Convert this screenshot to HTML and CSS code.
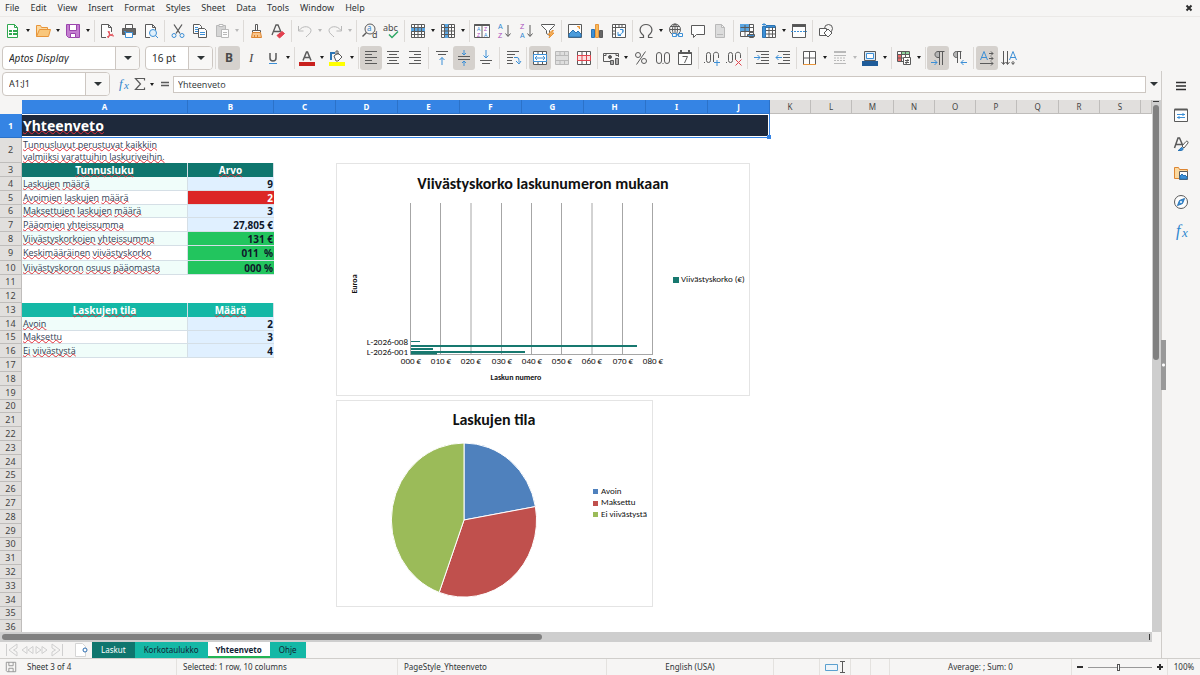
FILE: index.html
```html
<!DOCTYPE html>
<html lang="fi">
<head>
<meta charset="utf-8">
<title>Yhteenveto</title>
<link rel="stylesheet" href="styles.css">
</head>
<body>
<nav class="menubar">
  <button>File</button><button>Edit</button><button>View</button><button>Insert</button><button>Format</button><button>Styles</button><button>Sheet</button><button>Data</button><button>Tools</button><button>Window</button><button>Help</button>
  <button class="close" aria-label="Close"><svg viewBox="0 0 8 8" width="8" height="8"><path class="heavy" d="M1.500 1.500l5 5M6.500 1.500l-5 5"/></svg></button>
</nav>

<div class="toolbar standard">
  <button class="tool" aria-label="New"><svg viewBox="0 0 16 16"><path class="green fw" d="M2.500 1.500h7l3 3v10h-10z"/><path class="green" d="M9.500 1.500v3h3"/><path class="fg" d="M4 7h8v5H4z"/><path stroke="#fff" d="M4 9.500h8M7.500 7v5"/></svg></button><button class="caret" aria-label="New options"></button>
  <button class="tool" aria-label="Open"><svg viewBox="0 0 16 16"><path fill="#fbd9a0" stroke="#e8953a" d="M1.500 13.500v-11h4l1 2h6v2"/><path fill="#f9c77c" stroke="#e8953a" d="M1.500 13.500l3-7h11l-2 7z"/></svg></button><button class="caret" aria-label="Open options"></button>
  <button class="tool" aria-label="Save"><svg viewBox="0 0 16 16"><path fill="#c47fd0" stroke="#9b45ad" d="M1.500 1.500h13v13h-11l-2-2z"/><path fill="#fff" stroke="#9b45ad" d="M4.500 1.500h7v6h-7zM5.500 10.500h5v4h-5z"/></svg></button><button class="caret" aria-label="Save options"></button>
  <span class="sep tight"></span>
  <button class="tool" aria-label="Export as PDF"><svg viewBox="0 0 16 16"><path class="fw" d="M7 14.500H2.500v-13h7l3 3V9M9.500 1.500v3h3"/><path class="red" d="M9 8c1 3 3 5 6 5M9 15c1-1 2-4 1-7M8 14l6-3"/></svg></button>
  <button class="tool" aria-label="Print"><svg viewBox="0 0 16 16"><path class="fw" d="M4.500 5V1.500h7V5"/><path fill="#666" d="M1.500 5.500h13v6h-13z"/><path class="blue fw" d="M4.500 9.500h7v5h-7z"/><path class="blue" d="M3 8.500h2"/></svg></button>
  <button class="tool" aria-label="Print Preview"><svg viewBox="0 0 16 16"><path class="fw" d="M7 14.500H2.500v-13h7l3 3V7M9.500 1.500v3h3"/><circle class="blue" fill="#e1f0fb" cx="10" cy="10" r="3.500"/><path class="blue" d="M12.500 12.500l2.500 2.500"/></svg></button>
  <span class="sep"></span>
  <button class="tool" aria-label="Cut"><svg viewBox="0 0 16 16"><path stroke-width="1.300" d="M4 1.500l6 9M12 1.500l-6 9"/><circle class="blue" cx="4" cy="12.500" r="2"/><circle class="blue" cx="12" cy="12.500" r="2"/></svg></button>
  <button class="tool" aria-label="Copy"><svg viewBox="0 0 16 16"><path class="fw" d="M1.500 1.500h6l2 2v7h-8z"/><path class="fw" d="M6.500 5.500h6l2 2v7h-8z"/><path class="blue" d="M3 4.500h3M3 6.500h3M3 8.500h3M8 9.500h5M8 11.500h5"/></svg></button>
  <button class="tool" aria-label="Paste"><svg viewBox="0 0 16 16"><path class="dim" fill="#d5d5d5" d="M2.500 2.500h9v11h-9z"/><path class="dim fw" d="M5 1.500h4v2H5zM7.500 6.500h7v8h-7zM9 9.500h4M9 11.500h4"/></svg></button><button class="caret off" aria-label="Paste options"></button>
  <span class="sep tight"></span>
  <button class="tool" aria-label="Clone Formatting"><svg viewBox="0 0 16 16"><path class="fw" d="M7.500 1.500h2v6h-2zM4.500 7.500h8v2h-8z"/><path fill="#f8c48a" stroke="#dd8531" d="M4.500 9.500h8l1 5h-10z"/><path stroke="#dd8531" d="M6.500 12v2M9.500 12v2"/></svg></button>
  <button class="tool" aria-label="Clear Formatting"><svg viewBox="0 0 16 16"><path stroke-width="1.300" d="M2 12l4-10h2l3 7M4 8.500h6"/><path fill="#e3404f" stroke="#e3404f" d="M7 12.500l5-4 2.500 2-5 4.500z"/></svg></button>
  <span class="sep"></span>
  <button class="tool" aria-label="Undo"><svg viewBox="0 0 16 16"><path class="dim" d="M1.500 3v5h5M2 7.500c4-6 12-4 12 0 0 3-3 4-5 6.500"/></svg></button><button class="caret off" aria-label="Undo options"></button>
  <button class="tool" aria-label="Redo"><svg viewBox="0 0 16 16"><path class="dim" d="M14.500 3v5h-5M14 7.500c-4-6-12-4-12 0 0 3 3 4 5 6.500"/></svg></button><button class="caret off" aria-label="Redo options"></button>
  <span class="sep tight"></span>
  <button class="tool" aria-label="Find and Replace"><svg viewBox="0 0 16 16"><circle cx="9" cy="6" r="5"/><path stroke-width="1.500" d="M5.500 9.500l-4 4"/><text class="g bl" x="6" y="8" font-size="8">a</text><text class="g" x="11" y="15" font-size="9">d</text></svg></button>
  <button class="tool" aria-label="Spelling"><svg viewBox="0 0 16 16"><text class="g" x="0" y="8" font-size="9">abc</text><path stroke="#2fa866" stroke-width="1.500" d="M6 11.500l3 3 6-6"/></svg></button>
  <span class="sep"></span>
  <button class="tool" aria-label="Row"><svg viewBox="0 0 16 16"><path class="fw" d="M1.500 1.500h13v13h-13z"/><path fill="#5ba6e2" stroke="none" d="M1 4.500h14v4H1z"/><path d="M1.500 11.500h13M4.500 2v12M8 2v12M11.500 2v12M1.500 8.500h13M1.500 4.500h13"/></svg></button><button class="caret" aria-label="Row options"></button>
  <button class="tool" aria-label="Column"><svg viewBox="0 0 16 16"><path class="fw" d="M1.500 1.500h13v13h-13z"/><path fill="#5ba6e2" stroke="none" d="M4.500 1h4v14h-4z"/><path d="M11.500 2v12M4.500 2v12M8.500 2v12M1.500 4.500h13M1.500 8h13M1.500 11.500h13"/></svg></button><button class="caret" aria-label="Column options"></button>
  <span class="sep tight"></span>
  <button class="tool" aria-label="Sort"><svg viewBox="0 0 16 16"><path class="fw" d="M.5 1.500h15v13H.5zM8 2v12"/><path stroke-width="2" d="M.5 2h15"/><text class="g ls bl" x="3" y="8" font-size="5">A</text><text class="g ls pu" x="10" y="8" font-size="5">Z</text><text class="g ls pu" x="3" y="14" font-size="5">Z</text><text class="g ls bl" x="10" y="14" font-size="5">A</text></svg></button>
  <button class="tool" aria-label="Sort Ascending"><svg viewBox="0 0 16 16"><text class="g ls bl" x="2" y="6" font-size="7">A</text><text class="g ls pu" x="2" y="15" font-size="7">Z</text><path d="M12 2v11M9.500 10.500l2.500 3 2.500-3"/></svg></button>
  <button class="tool" aria-label="Sort Descending"><svg viewBox="0 0 16 16"><text class="g ls pu" x="2" y="6" font-size="7">Z</text><text class="g ls bl" x="2" y="15" font-size="7">A</text><path d="M12 2v11M9.500 10.500l2.500 3 2.500-3"/></svg></button>
  <button class="tool" aria-label="AutoFilter"><svg viewBox="0 0 16 16"><path class="fw" d="M1.500 1.500h13v1l-5 5v5l-3-2v-3l-5-5z"/><path fill="#f7b25c" stroke="#e8953a" d="M12 7.500l-4 4h2.500L9 15l5-5h-2.500l2-2.500z"/></svg></button>
  <span class="sep"></span>
  <button class="tool" aria-label="Image"><svg viewBox="0 0 16 16"><path class="fw" d="M1.500 1.500h13v13h-13z"/><path fill="#4a9bdb" stroke="#2b74b4" d="M2 14v-3l4-4 3 3 2-2 3 3v3z"/><path stroke="#e8953a" fill="#f7b25c" d="M10 3.500h2.500V6"/></svg></button>
  <button class="tool" aria-label="Chart"><svg viewBox="0 0 16 16"><path fill="#3c8fd6" stroke="#2b74b4" d="M2.500 6.500h3v8h-3z"/><path fill="#f7b95c" stroke="#e8953a" d="M6.500 1.500h3v13h-3z"/><path fill="#666" d="M10.500 7.500h3v7h-3z"/></svg></button>
  <button class="tool" aria-label="Pivot Table"><svg viewBox="0 0 16 16"><path class="fw" d="M1.500 1.500h13v13h-13zM1.500 4.500h13M4.500 1.500v13M8 2v2M11 2v2M2 8h2M2 11h2"/><path class="blue" d="M7 9v3.500h3M12 9.500V6.500H9M7 12c3 0 5-2 5-5"/></svg></button>
  <span class="sep"></span>
  <button class="tool" aria-label="Special Character"><svg viewBox="0 0 16 16"><path stroke-width="1.200" d="M1.500 14.500h4v-2C-1 7 3 1.500 8 1.500s9 5.500 2.500 11v2h4"/></svg></button><button class="caret" aria-label="Symbols"></button>
  <button class="tool" aria-label="Hyperlink"><svg viewBox="0 0 16 16"><circle cx="7" cy="6.500" r="5.500"/><path d="M1.500 6.500h11M2.500 3.500h9M7 1v9"/><ellipse cx="7" cy="6.500" rx="2.500" ry="5.500"/><path class="blue fw" d="M4.500 10.500h4v3h-4zM10.500 10.500h4v3h-4zM7.500 12h4"/></svg></button>
  <button class="tool" aria-label="Comment"><svg viewBox="0 0 16 16"><path class="fw" d="M1.500 2.500h13v9h-8l-3 3v-3h-2z"/></svg></button>
  <button class="tool" aria-label="Headers and Footers"><svg viewBox="0 0 16 16"><path class="dim" fill="#dcdcdc" d="M3.500 1.500h6l3 3v10h-9zM9.500 1.500v3h3M5 11.500h6"/></svg></button>
  <span class="sep"></span>
  <button class="tool" aria-label="Define Print Area"><svg viewBox="0 0 16 16"><path class="fw" d="M1.500 1.500h13v12h-13z"/><path fill="#5ba6e2" stroke="none" d="M1 1h9v8H1z"/><path d="M1.500 4.500h13M1.500 8.500h13M6 2v11M10.500 2v11"/><path class="fw" d="M10.500 9.500h4v5h-4z"/><path fill="#3c8fd6" d="M8.500 11.500h7v2h-7z"/></svg></button>
  <button class="tool" aria-label="Freeze Rows and Columns"><svg viewBox="0 0 16 16"><path class="fw" d="M4.500 3.500h10v11h-10z"/><path fill="#3c8fd6" stroke="#2b74b4" d="M1.500 3.500h3v11h-3zM5 2.500h9v2H5z"/><path d="M5 7.500h9M5 11h9M8 4v10M11.500 4v10"/><path class="blue" d="M3 0v3M1 1.500h4"/></svg></button><button class="caret" aria-label="Freeze options"></button>
  <button class="tool" aria-label="Split Window"><svg viewBox="0 0 16 16"><path class="fw" d="M1.500 1.500h13v13h-13z"/><path fill="#555" d="M1.500 1.500h13v2h-13z"/><path class="blue" stroke-dasharray="2 1" d="M0 8.500h16"/></svg></button>
  <span class="sep"></span>
  <button class="tool" aria-label="Show Draw Functions"><svg viewBox="0 0 16 16"><circle cx="10.500" cy="5.500" r="4"/><path class="fw" d="M1.500 5.500h7v7h-7z"/><path class="fw" d="M10 6l4 4-4 4-4-4z"/></svg></button>
</div>

<div class="toolbar formatting">
  <div class="combo font"><input type="text" aria-label="Font Name" value="Aptos Display"><button aria-label="Show fonts"></button></div>
  <div class="combo size"><input type="text" aria-label="Font Size" value="16 pt"><button aria-label="Show sizes"></button></div>
  <span class="sep"></span>
  <button class="tool on" aria-label="Bold"><svg viewBox="0 0 16 16"><text class="g" x="4" y="12" font-size="12" font-weight="700">B</text></svg></button>
  <button class="tool" aria-label="Italic"><svg viewBox="0 0 16 16"><text class="g it" x="6" y="12" font-size="13">I</text></svg></button>
  <button class="tool" aria-label="Underline"><svg viewBox="0 0 16 16"><path stroke-width="1.500" d="M5 3v5c0 4 6 4 6 0V3"/><path class="blue" d="M4 13.500h8"/></svg></button><button class="caret" aria-label="Underline options"></button>
  <span class="sep tight"></span>
  <button class="tool" aria-label="Font Color"><svg viewBox="0 0 16 16"><path stroke-width="1.500" d="M4 10.500L7.500 2h1L12 10.500M5 7.500h6"/><path fill="#c9211e" stroke="none" d="M0 12h16v4H0z"/></svg></button><button class="caret" aria-label="Font Color options"></button>
  <button class="tool" aria-label="Background Color"><svg viewBox="0 0 16 16"><path class="fw" d="M5 6l4-3 4 4-4 4H7zM7 5V1h2v4"/><path stroke="#2b74b4" stroke-width="2" d="M6 3H2v7"/><path fill="#ff0" stroke="none" d="M0 12h16v4H0z"/></svg></button><button class="caret" aria-label="Background Color options"></button>
  <span class="sep tight"></span>
  <button class="tool on" aria-label="Align Left"><svg viewBox="0 0 16 16"><path d="M2 1.500h12M2 4.500h7M2 7.500h12M2 10.500h7M2 13.500h12"/></svg></button>
  <button class="tool" aria-label="Center Horizontally"><svg viewBox="0 0 16 16"><path d="M2 1.500h12M4 4.500h8M2 7.500h12M4 10.500h8M2 13.500h12"/></svg></button>
  <button class="tool" aria-label="Align Right"><svg viewBox="0 0 16 16"><path d="M2 1.500h12M7 4.500h7M2 7.500h12M7 10.500h7M2 13.500h12"/></svg></button>
  <span class="sep"></span>
  <button class="tool" aria-label="Align Top"><svg viewBox="0 0 16 16"><path d="M2 1.500h12M4 4.500h8"/><path class="blue" d="M8 15V7.500M5.500 10L8 7.500l2.500 2.500"/></svg></button>
  <button class="tool on" aria-label="Center Vertically"><svg viewBox="0 0 16 16"><path d="M2 6.500h12M2 9.500h12"/><path class="blue" d="M8 0v5M6 3l2 2 2-2M8 16v-5M6 13l2-2 2 2"/></svg></button>
  <button class="tool" aria-label="Align Bottom"><svg viewBox="0 0 16 16"><path d="M2 10.500h12M4 13.500h8"/><path class="blue" d="M8 0v8M5.500 5.500L8 8l2.500-2.500"/></svg></button>
  <span class="sep"></span>
  <button class="tool" aria-label="Wrap Text"><svg viewBox="0 0 16 16"><path d="M2 1.500h12M2 4.500h8M2 7.500h6M2 10.500h5M2 13.500h6"/><path class="blue" d="M9 7.500h3c2 0 2 2 2 5M11 11l3 3 2-3"/></svg></button>
  <span class="sep"></span>
  <button class="tool on" aria-label="Merge and Center Cells"><svg viewBox="0 0 16 16"><path class="fw" d="M1.500 1.500h13v13h-13zM6 2v12M10.500 2v12"/><path class="blue fw" d="M1.500 4.500h13v7h-13z"/><path class="blue" d="M3 8h10M5 6L3 8l2 2M11 6l2 2-2 2"/></svg></button>
  <button class="tool" aria-label="Merge Cells"><svg viewBox="0 0 16 16"><path class="dim" fill="#dedede" d="M1.500 1.500h13v13h-13zM1.500 5.500h13M1.500 10.500h13M6 2v3M10.500 2v3M6 11v3M10.500 11v3"/></svg></button>
  <button class="tool" aria-label="Unmerge Cells"><svg viewBox="0 0 16 16"><path class="fw" d="M1.500 1.500h13v13h-13zM6 2v12M10.500 2v12"/><path class="red" fill="#fbe0e0" d="M1.500 5.500h13v5h-13zM6 5v6M10.500 5v6"/></svg></button>
  <span class="sep"></span>
  <button class="tool" aria-label="Format as Currency"><svg viewBox="0 0 16 16"><path d="M8 11.500H.5v-8h15V7M3 3.500v2H.5M13 3.500v2h2"/><circle fill="#555" cx="7" cy="7" r="1.500"/><path fill="#aaa" d="M7.500 10.500h3v4h-3zM12.500 8.500h3v6h-3z"/></svg></button><button class="caret" aria-label="Currency options"></button>
  <button class="tool" aria-label="Format as Percent"><svg viewBox="0 0 16 16"><circle cx="5" cy="5" r="2.500"/><circle cx="11" cy="11" r="2.500"/><path d="M12.500 1.500l-9 13"/></svg></button>
  <button class="tool" aria-label="Format as Number"><svg viewBox="0 0 16 16"><rect x="1.500" y="2.500" width="5" height="11" rx="2.500"/><rect x="9.500" y="2.500" width="5" height="11" rx="2.500"/><path d="M7.500 13.500h1"/></svg></button>
  <button class="tool" aria-label="Format as Date"><svg viewBox="0 0 16 16"><path class="fw" d="M1.500 2.500h13v12h-13z"/><path stroke-width="2" d="M1.500 3h13M4 0v3M12 0v3"/><path d="M5.500 6.500h5l-3 6.500"/></svg></button>
  <span class="sep"></span>
  <button class="tool" aria-label="Add Decimal Place"><svg viewBox="0 0 16 16"><rect x="2.500" y="2.500" width="4" height="10" rx="2"/><path d="M9.500 12V4.500c0-3 5-3 5 0V8M0 12.500h1"/><path class="blue" d="M10 12.500h6M13 10v6"/></svg></button>
  <button class="tool" aria-label="Delete Decimal Place"><svg viewBox="0 0 16 16"><rect x="2.500" y="2.500" width="4" height="10" rx="2"/><path d="M9.500 10V4.500c0-3 5-3 5 0V8M0 12.500h1"/><path class="red" d="M9.500 9.500l6 6M15.500 9.500l-6 6"/></svg></button>
  <span class="sep"></span>
  <button class="tool" aria-label="Increase Indent"><svg viewBox="0 0 16 16"><path d="M3 1.500h13M8 4.500h8M8 7.500h8M8 10.500h8M3 13.500h13"/><path class="blue" d="M1 7.500h6M4.500 5L7 7.500 4.500 10"/></svg></button>
  <button class="tool" aria-label="Decrease Indent"><svg viewBox="0 0 16 16"><path d="M3 1.500h12M8 4.500h7M8 7.500h7M8 10.500h7M3 13.500h12"/><path class="blue" d="M7 7.500H1M3.500 5L1 7.500 3.500 10"/></svg></button>
  <span class="sep"></span>
  <button class="tool" aria-label="Borders"><svg viewBox="0 0 16 16"><path class="fw" d="M1.500 14V1.500h12V14M1.500 8h12M7.500 2v12"/><path stroke="#e8953a" d="M1 14.500h13"/></svg></button><button class="caret" aria-label="Borders options"></button>
  <button class="tool" aria-label="Border Style"><svg viewBox="0 0 16 16"><path class="dim" stroke-width="2" d="M2 2h12"/><path class="dim" d="M2 5.500h12M2 13.500h12"/><path class="dim" stroke-dasharray="2 1" d="M2 8h12M2 10.500h12"/></svg></button><button class="caret off" aria-label="Border Style options"></button>
  <button class="tool" aria-label="Border Color"><svg viewBox="0 0 16 16"><path fill="#dcecf8" d="M2.500 1.500h11v9h-11z"/><path class="blue fw" d="M4.500 3.500h7v5h-7z"/><path fill="#1f5c99" stroke="none" d="M0 11h16v5H0z"/></svg></button><button class="caret" aria-label="Border Color options"></button>
  <span class="sep tight"></span>
  <button class="tool" aria-label="Conditional"><svg viewBox="0 0 16 16"><path class="fw" d="M1.500 1.500h12v10h-12z"/><path fill="#8fd19e" stroke="none" d="M5 2h8v3H5z"/><path fill="#ec6b6b" stroke="none" d="M2 5h4v6H2z"/><path d="M1.500 4.500h12M1.500 8h12M5.500 2v10M9.500 2v10"/><path class="fw" d="M7.500 7.500h7v7h-7zM9 10.500h4M9 12.500h4M12 9l-2 5"/></svg></button><button class="caret" aria-label="Conditional options"></button>
  <span class="sep tight"></span>
  <button class="tool on" aria-label="Left-To-Right"><svg viewBox="0 0 16 16"><path fill="#b5b5b5" d="M9.500 1.500H8c-4 0-4 6 0 6h1.500z"/><path d="M9.500 15V1.500h5M12.500 1.500V15"/><path class="blue" d="M1 12.500h6M4.500 10L7 12.500 4.500 15"/></svg></button>
  <button class="tool" aria-label="Right-To-Left"><svg viewBox="0 0 16 16"><path fill="#b5b5b5" d="M5.500 1.500H4.500c-4 0-4 6 0 6h1z"/><path d="M5.500 13V1.500h4M8.500 1.500V9"/><path class="blue" d="M15 12.500H9M11.500 10L9 12.500l2.500 2.500"/></svg></button>
  <span class="sep"></span>
  <button class="tool on" aria-label="Text direction from left to right"><svg viewBox="0 0 16 16"><path class="blue" d="M1.500 10L5 1.500 8.500 10M3 7.500h4"/><path d="M10 3.500h4M10 8.500h4M1 13.500h13M12 1.500l2 2-2 2M12 6.500l2 2-2 2M12 11.500l2 2-2 2"/></svg></button>
  <button class="tool" aria-label="Text direction from top to bottom"><svg viewBox="0 0 16 16"><path class="blue" d="M8.500 10L12 1.500 15.500 10M10 7.500h4"/><path d="M2.500 1v13M6.500 1v13M12 11v3M.5 12l2 2.500 2-2.500M5 12l1.500 2.500L8.500 12M10.500 12.500l1.500 2 1.500-2"/></svg></button>
</div>

<div class="workspace">
  <main class="document">
    <div class="formulabar">
      <div class="combo name"><input type="text" aria-label="Name Box" value="A1:J1"><button aria-label="Show names"></button></div>
      <div class="functions">
        <button class="fx" aria-label="Function Wizard"><svg viewBox="0 0 16 16"><text class="g bl it" x="3" y="12" font-size="13">f</text><text class="g bl it" x="8" y="13" font-size="11">x</text></svg></button>
        <button class="fx" aria-label="Select Function"><svg viewBox="0 0 16 16"><path stroke-width="1.200" d="M12.500 4.500v-2h-9l5 5.500-5 5.500h9v-2"/></svg></button><button class="caret" aria-label="Functions"></button>
        <button class="fx" aria-label="Formula"><svg viewBox="0 0 16 16"><path stroke-width="1.500" d="M4 6.500h8M4 9.500h8"/></svg></button>
      </div>
      <input class="formula" type="text" aria-label="Input line" value="Yhteenveto">
      <button class="expand" aria-label="Expand Formula Bar"></button>
    </div>

    <div class="viewport">
      <div class="sheet">
        <table>
          <colgroup><col class="c-head"><col class="c-a"><col class="c-b"><col class="c-mid"><col class="c-mid"><col class="c-mid"><col class="c-mid"><col class="c-mid"><col class="c-mid"><col class="c-mid"><col class="c-mid"><col class="c-std"><col class="c-std"><col class="c-wide"><col class="c-std"><col class="c-std"><col class="c-std"><col class="c-wide"><col class="c-std"><col class="c-std"><col></colgroup>
          <thead><tr><td></td><th class="sel">A</th><th class="sel">B</th><th class="sel">C</th><th class="sel">D</th><th class="sel">E</th><th class="sel">F</th><th class="sel">G</th><th class="sel">H</th><th class="sel">I</th><th class="sel">J</th><th>K</th><th>L</th><th>M</th><th>N</th><th>O</th><th>P</th><th>Q</th><th>R</th><th>S</th><th></th></tr></thead>
          <tbody>
            <tr class="r-title"><th class="sel">1</th><td class="title" colspan="10"><span class="sp">Yhteenveto</span><i class="handle"></i></td></tr>
            <tr class="r-note"><th>2</th><td class="note"><span class="sp">Tunnusluvut perustuvat kaikkiin valmiiksi varattuihin laskuriveihin.</span></td></tr>
            <tr><th>3</th><td class="head"><span class="sp">Tunnusluku</span></td><td class="head"><span class="sp">Arvo</span></td></tr>
            <tr><th>4</th><td class="label mint"><span class="sp">Laskujen</span> <span class="sp">määrä</span></td><td class="num">9</td></tr>
            <tr><th>5</th><td class="label"><span class="sp">Avoimien</span> <span class="sp">laskujen</span> <span class="sp">määrä</span></td><td class="num bad">2</td></tr>
            <tr class="s"><th>6</th><td class="label mint"><span class="sp">Maksettujen</span> <span class="sp">laskujen</span> <span class="sp">määrä</span></td><td class="num">3</td></tr>
            <tr><th>7</th><td class="label"><span class="sp">Pääomien</span> <span class="sp">yhteissumma</span></td><td class="num">27,805 €</td></tr>
            <tr><th>8</th><td class="label mint"><span class="sp">Viivästyskorkojen</span> <span class="sp">yhteissumma</span></td><td class="num good">131 €</td></tr>
            <tr class="l"><th>9</th><td class="label"><span class="sp">Keskimääräinen</span> <span class="sp">viivästyskorko</span></td><td class="num good">011 &nbsp;%</td></tr>
            <tr><th>10</th><td class="label mint"><span class="sp">Viivästyskoron</span> <span class="sp">osuus</span> <span class="sp">pääomasta</span></td><td class="num good">000 %</td></tr>
            <tr><th>11</th></tr>
            <tr><th>12</th></tr>
            <tr><th>13</th><td class="head teal"><span class="sp">Laskujen tila</span></td><td class="head teal"><span class="sp">Määrä</span></td></tr>
            <tr><th>14</th><td class="label mint"><span class="sp">Avoin</span></td><td class="num">2</td></tr>
            <tr class="s"><th>15</th><td class="label"><span class="sp">Maksettu</span></td><td class="num">3</td></tr>
            <tr><th>16</th><td class="label mint"><span class="sp">Ei</span> <span class="sp">viivästystä</span></td><td class="num">4</td></tr>
            <tr><th>17</th></tr>
            <tr><th>18</th></tr>
            <tr><th>19</th></tr>
            <tr class="s"><th>20</th></tr>
            <tr><th>21</th></tr>
            <tr><th>22</th></tr>
            <tr><th>23</th></tr>
            <tr><th>24</th></tr>
            <tr class="s"><th>25</th></tr>
            <tr><th>26</th></tr>
            <tr><th>27</th></tr>
            <tr><th>28</th></tr>
            <tr><th>29</th></tr>
            <tr class="s"><th>30</th></tr>
            <tr><th>31</th></tr>
            <tr><th>32</th></tr>
            <tr><th>33</th></tr>
            <tr><th>34</th></tr>
            <tr class="s"><th>35</th></tr>
            <tr><th>36</th></tr>
          </tbody>
        </table>

        <svg class="chart bars" viewBox="-1 -1 414 233" role="img" aria-label="Viivästyskorko laskunumeron mukaan">
          <text class="ctitle" x="206" y="25">Viivästyskorko laskunumeron mukaan</text>
          <path class="grid" d="M73.500 39v152M103.500 39v152M134 39v152M164.500 39v152M194.500 39v152M224.500 39v152M255 39v152M285.500 39v152M315.500 39v152M73 190.500h243"/>
          <path class="bar" d="M74 177h9v1h-9zM74 181h226v2H74zM74 184h22v2H74zM74 187h114v2H74zM74 189h26v1.500H74z"/>
          <text class="lbl end" x="71" y="181">L-2026-008</text>
          <text class="lbl end" x="71" y="191">L-2026-001</text>
          <g class="lbl mid"><text x="74" y="200">000 €</text><text x="104" y="200">010 €</text><text x="134" y="200">020 €</text><text x="165" y="200">030 €</text><text x="195" y="200">040 €</text><text x="225" y="200">050 €</text><text x="255" y="200">060 €</text><text x="286" y="200">070 €</text><text x="316" y="200">080 €</text></g>
          <text class="lbl mid strong" x="179" y="216">Laskun numero</text>
          <text class="lbl mid strong" x="0" y="0" transform="translate(20 120) rotate(-90)">Euroa</text>
          <path class="bar" d="M336 113h6v6h-6z"/>
          <text class="lbl" x="344" y="118">Viivästyskorko (€)</text>
        </svg>

        <svg class="chart pie" viewBox="-1 -1 317 207" role="img" aria-label="Laskujen tila">
          <text class="ctitle" x="157" y="24">Laskujen tila</text>
          <g stroke="#fff"><path fill="#4f81bd" d="M127 119V42A72.500 77 0 0 1 198.400 105.600z"/><path fill="#c0504d" d="M127 119L198.400 105.600A72.500 77 0 0 1 102.200 191.400z"/><path fill="#9bbb59" d="M127 119L102.200 191.400A72.500 77 0 0 1 127 42z"/></g>
          <g stroke="none"><path fill="#4f81bd" d="M256 88h5v5h-5z"/><path fill="#c0504d" d="M256 100h5v5h-5z"/><path fill="#9bbb59" d="M256 111h5v5h-5z"/></g>
          <text class="lbl" x="264" y="93">Avoin</text>
          <text class="lbl" x="264" y="104">Maksettu</text>
          <text class="lbl" x="264" y="116">Ei viivästystä</text>
        </svg>
      </div>
      <div class="vscroll"><i class="mark"></i><i class="thumb"></i></div>
    </div>
    <div class="hscroll"><i class="thumb"></i><i class="mark"></i></div>

    <div class="tabs">
      <button class="nav" aria-label="First sheet"><svg viewBox="0 0 14 14"><path d="M1.500 1v12M12 1L4 7l8 6V9L8.500 7 12 5z"/></svg></button>
      <button class="nav" aria-label="Previous sheet"><svg viewBox="0 0 14 14"><path d="M7 3.500L2 7l5 3.500zM13 3.500L8 7l5 3.500z"/></svg></button>
      <button class="nav" aria-label="Next sheet"><svg viewBox="0 0 14 14"><path d="M1 3.500L6 7l-5 3.500zM7 3.500L12 7l-5 3.500z"/></svg></button>
      <button class="nav" aria-label="Last sheet"><svg viewBox="0 0 14 14"><path d="M12.500 1v12M2 1l8 6-8 6V9l3.500-2L2 5z"/></svg></button>
      <button class="add" aria-label="Add Sheet"><svg viewBox="0 0 14 14"><path fill="#fff" stroke="#d5d5d5" d="M.5.500h7l3 3v10h-10z"/><circle cx="10" cy="7" r="2" fill="#fff" stroke="#2b6cb0"/></svg></button>
      <button class="tab dark">Laskut</button><button class="tab">Korkotaulukko</button><button class="tab active">Yhteenveto</button><button class="tab">Ohje</button>
    </div>
  </main>

  <aside class="sidebar">
    <i class="grip"></i>
    <button aria-label="Sidebar Settings"><svg viewBox="0 0 16 16"><path stroke="#2e2e2e" stroke-width="1.500" d="M3 4.500h10M3 8h10M3 11.500h10"/></svg></button>
    <button aria-label="Properties"><svg viewBox="0 0 16 16"><path class="fw" d="M1.500 2.500h13v12h-13z"/><path stroke-width="2" d="M1.500 2.500h13"/><path class="blue" d="M4 7.500h8M4 10.500h8M10 6v3M6 9v3"/></svg></button>
    <button aria-label="Styles"><svg viewBox="0 0 16 16"><path stroke-width="1.500" d="M1.500 12L5 2h1.500L10 10M3 8.500h6"/><path class="fw" d="M9 10l4-4.500c1-1 2.500 0 2 1.500l-4 5z"/><path fill="#3c8fd6" stroke="#2b74b4" d="M5 14.500c2 0 2-3 4-3 2 1 1 3-1 3z"/></svg></button>
    <button aria-label="Gallery"><svg viewBox="0 0 16 16"><path fill="#fbd9a0" stroke="#dd8531" d="M1.500 13.500v-11h4l1 2h8v9z"/><path class="fw" d="M6.500 6.500h8v8h-8z"/><path fill="#3c8fd6" stroke="#2b74b4" d="M7 14v-3l2-2 2 2 1-1 2 2v2z"/></svg></button>
    <button aria-label="Navigator"><svg viewBox="0 0 16 16"><circle class="fw" cx="8" cy="8" r="6.500"/><path fill="#3c8fd6" stroke="#2b74b4" d="M11.500 4.500l-2 5-5 2 2-5z"/><circle cx="8" cy="8" r="1" fill="#fff" stroke="none"/></svg></button>
    <button aria-label="Functions"><svg viewBox="0 0 16 16"><text class="g bl it" x="3" y="13" font-size="16">f</text><text class="g bl it" x="9" y="14" font-size="13">x</text></svg></button>
  </aside>
</div>

<footer class="status">
  <span class="cell"><svg viewBox="0 0 14 14" width="12" height="12"><path stroke="#8c8c8c" d="M1.500 1.500h11v11h-10l-1-1zM4.500 1.500v4h5v-4M4.500 12.500v-4h5v4"/></svg></span>
  <span class="cell left">Sheet 3 of 4</span>
  <span class="cell left">Selected: 1 row, 10 columns</span>
  <span class="cell left">PageStyle_Yhteenveto</span>
  <span class="cell">English (USA)</span>
  <span class="cell"></span>
  <span class="cell"><svg viewBox="0 0 22 12" width="22" height="12"><path stroke="#5ba0cf" fill="#eef5fa" d="M1.500 3.500h12v6h-12z"/><path d="M16 .5h5M18.500.5v11M16 11.500h5"/></svg></span>
  <span class="cell"></span>
  <span class="cell"></span>
  <span class="cell">Average: ; Sum: 0</span>
  <span class="cell zoom"><button aria-label="Zoom Out"><svg viewBox="0 0 8 8" width="8" height="8"><path class="heavy" d="M1 4h6"/></svg></button><input type="range" aria-label="Zoom" min="0" max="100" value="49"><button aria-label="Zoom In"><svg viewBox="0 0 8 8" width="8" height="8"><path class="heavy" d="M1 4h6M4 1v6"/></svg></button></span>
  <span class="cell">100%</span>
</footer>
</body>
</html>
```
FILE: styles.css
```css
* { box-sizing: border-box; }
html, body { height: 100%; }
body {
  margin: 0;
  display: flex;
  flex-direction: column;
  overflow: hidden;
  background: #f6f5f4;
  color: #2e3436;
  font: 9px/12px "Noto Sans", "Open Sans", sans-serif;
}
button, input { font: inherit; color: inherit; }
button { padding: 0; border: 0; background: none; }
input { min-width: 0; }

/* Icon strokes */
svg { fill: none; stroke: #5a5a5a; display: block; flex: none; overflow: visible; }
svg .fw { fill: #fdfdfd; }
svg .blue { stroke: #3c8fd6; }
svg .red { stroke: #e0454f; }
svg .green { stroke: #2fa84f; }
svg .fg { fill: #2fa84f; stroke: none; }
svg .dim { stroke: #b9b9b9; }
svg .heavy { stroke: #2e2e2e; stroke-width: 2; }
svg .g { fill: #4a4a4a; stroke: none; font-family: "Noto Sans", sans-serif; }
svg .ls { font-family: "Liberation Sans", sans-serif; }
svg .bl { fill: #2f86cf; }
svg .pu { fill: #a84bbb; }
svg .it { font-family: "Liberation Serif", serif; font-style: italic; }

.menubar { display: flex; height: 17px; padding: 0 6px 0 0; border-bottom: 1px solid #ebe9e7; }
.menubar button { padding: 0 5px; margin-right: 1px; }
.menubar .close { margin: 0 1px 0 auto; padding: 0; }

.toolbar { display: flex; align-items: center; height: 27px; padding-left: 2px; }
.tool { width: 22px; height: 24px; display: flex; align-items: center; justify-content: center; border-radius: 3px; flex: none; }
.tool svg { width: 16px; height: 16px; }
.tool.on { background: #d5d1cd; }
.caret { width: 8px; height: 24px; display: flex; align-items: center; justify-content: center; flex: none; }
.caret::before { content: ""; border: 2px solid transparent; border-top: 3px solid #1c1c1c; border-bottom: 0; }
.caret.off::before { border-top-color: #b9b9b9; }
.sep { width: 5px; height: 22px; flex: none; background: linear-gradient(#dddad7, #dddad7) center / 1px 100% no-repeat; }
.sep.tight { width: 4px; }

.combo { display: flex; height: 24px; border: 1px solid #cdc7c2; border-radius: 4px; background: #fff; overflow: hidden; flex: none; font-size: 10px; }
.combo input { flex: 1; padding: 0 6px; border: 0; background: none; color: #2a2a2a; }
.combo button { width: 24px; border-left: 1px solid #cdc7c2; background: #f8f7f6; display: grid; place-items: center; }
.combo button::before, .expand::before { content: ""; border: 4px solid transparent; border-top-color: #2e3436; border-bottom: 0; }
.combo.font { width: 138px; margin-right: 5px; }
.combo.font input { font-style: italic; }
.combo.size { width: 68px; }
.combo.name { width: 108px; font-size: 9px; }

.workspace { flex: 1; min-height: 0; display: flex; }
.document { flex: 1; min-width: 0; display: flex; flex-direction: column; }
.formulabar { display: flex; align-items: center; height: 29px; padding: 0 0 3px 2px; }
.functions { display: flex; align-items: center; padding-left: 6px; }
.fx { width: 16px; height: 20px; }
.fx svg { width: 16px; height: 16px; }
.functions .caret { margin-right: 1px; }
.formula { flex: 1; height: 17px; padding: 0 4px; border: 1px solid #cdc7c2; background: #fff; font-family: "Open Sans", sans-serif; }
.expand { width: 15px; height: 17px; display: grid; place-items: center; }

.viewport { flex: 1; min-height: 0; display: flex; }
.sheet { flex: 1; min-width: 0; position: relative; overflow: hidden; background: #fff; }
.sheet table { width: 100%; table-layout: fixed; border-collapse: separate; border-spacing: 0; }
.c-head { width: 22px; }
.c-a { width: 166px; }
.c-b { width: 86px; }
.c-mid { width: 62px; }
.c-std { width: 41px; }
.c-wide { width: 42px; }
.sheet tr { height: 14px; }
.sheet tr.s { height: 13px; }
.sheet tr.l { height: 15px; }
.sheet tr.r-title { height: 24px; }
.sheet tr.r-note { height: 25px; }
.sheet th, .sheet td { padding: 0 1px; height: inherit; line-height: 12px; }
.sheet thead td { background: #f6f5f4; }
.sheet th { padding: 0; font-size: 9px; font-weight: 400; color: #444; background: #e1dfdd; border-right: 1px solid #bfbdbb; border-bottom: 1px solid #bfbdbb; }
.sheet thead th { font-size: 8px; }
.sheet th.sel { background: #3584e4; color: #fff; font-weight: 700; border-color: #2b72c9; }
.sheet .title { position: relative; background: #1e293b; color: #fff; font-size: 14px; font-weight: 700; line-height: 20px; border: solid #3584e4; border-width: 0 1px 1px 0; box-shadow: inset 0 1px #fff, inset 0 -1px #fff, inset -1px 0 #fff; }
.handle { position: absolute; right: -2px; bottom: -2px; width: 4px; height: 4px; background: #3584e4; }
.sp { text-decoration: underline wavy #e0303a 1px; text-decoration-skip-ink: none; text-underline-offset: -1px; }
.sheet .note { padding: 1px 1px 0; vertical-align: top; font-family: "Open Sans", sans-serif; color: #334155; }
.head { background: #0f766e; color: #fff; font-weight: 700; text-align: center; border: solid #d5dfe6; border-width: 0 1px 0 0; font-size: 10px; }
.head.teal { background: #14b8a6; }
.label { font-family: "Open Sans", sans-serif; color: #334155; border: solid #d5dfe6; border-width: 0 1px 1px 0; }
.mint { background: #f0fdfa; }
.num { background: #e0f0ff; color: #0f172a; text-align: right; font-weight: 700; border: solid #d5dfe6; border-width: 0 0 1px; font-size: 10px; }
.num.bad { background: #dc2626; color: #fff; }
.num.good { background: #22c55e; }

.chart { position: absolute; left: 336px; background: #fff; box-shadow: inset 0 0 0 1px #e4e4e4; }
.bars { top: 63px; width: 414px; height: 233px; }
.pie { top: 300px; width: 317px; height: 207px; }
.chart text { stroke: none; fill: #111; font-family: Carlito, Lato, sans-serif; }
.ctitle { font-size: 16px; font-weight: 700; text-anchor: middle; }
.lbl { font-size: 9px; }
.mid { text-anchor: middle; }
.end { text-anchor: end; }
.strong { font-size: 8px; font-weight: 700; }
.grid { stroke: #a6a6a6; }
.bar { fill: #17786f; stroke: none; }

.mark { display: block; background: #3a3a3a; }
.vscroll { width: 9px; padding: 1px 2px 0 1px; background: #cecece; }
.vscroll .mark { height: 1px; margin-bottom: 3px; }
.vscroll .thumb { display: block; height: 48%; border-radius: 3px; background: #808080; }
.hscroll { display: flex; justify-content: space-between; height: 10px; margin-right: 9px; padding: 2px; background: #cecece; }
.hscroll .mark { width: 1px; }
.hscroll .thumb { width: 47%; border-radius: 3px; background: #808080; }

.tabs { display: flex; height: 16px; padding-left: 5px; }
.nav svg { width: 14px; height: 14px; stroke: #cfcfcf; }
.nav { width: 15px; }
.add { width: 14px; margin: 0 3px 0 10px; }
.add svg { width: 14px; height: 14px; }
.tab { padding: 0 9px; background: #14b8a6; color: #123; font-size: 8px; }
.tab.dark { background: #0f766e; color: #fff; }
.tab.active { padding: 2px 8px 0; background: #fff; font-weight: 700; border-bottom: 2px solid #22b455; }

.sidebar { position: relative; width: 39px; border-left: 1px solid #cfccc9; display: flex; flex-direction: column; align-items: center; }
.sidebar button { height: 29px; }
.sidebar svg { width: 16px; height: 16px; }
.grip { position: absolute; left: -1px; top: calc(50% - 25px); width: 5px; height: 50px; background: radial-gradient(circle at 50% 50%, #fff 1px, #999 2px); }

.status { display: grid; grid-template-columns: 21px 156fr 221fr 209fr 167fr 46px 31px 20px 19px 182fr 96px 32px; height: 17px; border-top: 1px solid #d0cecb; font-size: 8px; }
.cell { display: flex; align-items: center; justify-content: center; border-right: 1px solid #e4e2df; white-space: nowrap; }
.cell:first-child { border-right: 0; }
.cell:last-child { border-right: 0; }
.cell.left { justify-content: flex-start; padding-left: 6px; }
.zoom { gap: 4px; }
.zoom input { appearance: none; width: 64px; height: 8px; margin: 0; background: linear-gradient(#999, #999) center / 100% 1px no-repeat; }
.zoom input::-webkit-slider-thumb { appearance: none; width: 3px; height: 7px; border: 1px solid #555; background: #fff; }
```
